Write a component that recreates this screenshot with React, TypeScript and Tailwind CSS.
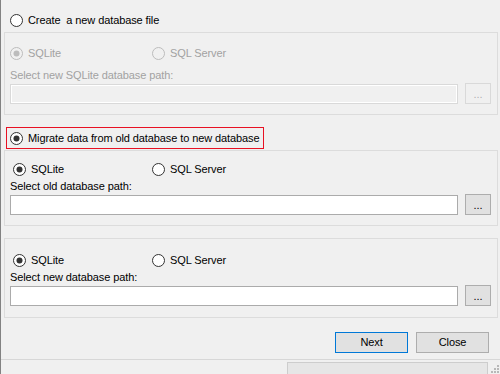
import type { ReactNode } from "react";

const FONT = "font-['Liberation_Sans',Arial,sans-serif] text-[11px] tracking-[-0.1px]";

function Radio({ checked, disabled }: { checked?: boolean; disabled?: boolean }) {
  const stroke = disabled ? "#bcbcbc" : "#333333";
  const fill = disabled ? "#f0f0f0" : "#ffffff";
  return (
    <svg width="13" height="13" viewBox="0 0 13 13" className="shrink-0">
      <circle cx="6.5" cy="6.5" r="6" fill={fill} stroke={stroke} />
      {checked && <circle cx="6.5" cy="6.5" r="3" fill={stroke} />}
    </svg>
  );
}

function Option({
  label,
  checked,
  disabled,
  className = "",
}: {
  label: ReactNode;
  checked?: boolean;
  disabled?: boolean;
  className?: string;
}) {
  return (
    <div className={`flex items-center h-[16px] gap-[5px] ${className}`}>
      <Radio checked={checked} disabled={disabled} />
      <span className={disabled ? "text-[#a2a2a2]" : "text-black"}>{label}</span>
    </div>
  );
}

function PathRow({ disabled }: { disabled?: boolean }) {
  return (
    <div className="flex items-start mt-[1px] pl-[5px]">
      {disabled ? (
        <div className="mt-[1px] w-[448px] h-[20px] border border-[#d9d9d9] bg-[#f0f0f0] shadow-[inset_0_0_0_1px_#ffffff]" />
      ) : (
        <div className="mt-[1px] w-[448px] h-[20px] border border-[#ababab] bg-white" />
      )}
      <button
        className={`ml-[7px] w-[26px] h-[21px] flex items-end justify-center pb-[3px] leading-none border ${
          disabled
            ? "border-[#d9d9d9] bg-[#f0f0f0] text-[#b0b0b0]"
            : "border-[#adadad] bg-[#e1e1e1] text-black"
        }`}
      >
        ...
      </button>
    </div>
  );
}

function EngineGroup({
  label,
  top,
  height,
}: {
  label: string;
  top: string;
  height: string;
}) {
  return (
    <div className={`ml-[3px] w-[494px] border border-[#dcdcdc] ${height}`}>
      <div className={`flex pl-[8px] ${top}`}>
        <Option label="SQLite" checked className="w-[139px]" />
        <Option label="SQL Server" />
      </div>
      <div className="mt-[2px] pl-[5px] h-[14px] leading-[14px] text-black">{label}</div>
      <PathRow />
    </div>
  );
}

export default function App() {
  return (
    <div
      className={`w-[500px] h-[374px] bg-[#f0f0f0] border-l border-[#828282] flex flex-col overflow-hidden ${FONT}`}
    >
      <div className="flex-1">
        <Option
          label={<span className="whitespace-pre">Create  a new database file</span>}
          className="mt-[12px] pl-[9px]"
        />

        <div className="mt-[4px]">
          <div className="ml-[3px] w-[494px] h-[83px] border border-[#dcdcdc]">
            <div className="flex mt-[12px] pl-[5px]">
              <Option label="SQLite" checked disabled className="w-[142px]" />
              <Option label="SQL Server" disabled />
            </div>
            <div className="mt-[7px] pl-[5px] h-[14px] leading-[14px] text-[#a2a2a2]">
              Select new SQLite database path:
            </div>
            <PathRow disabled />
          </div>
        </div>

        <div className="mt-[12px] ml-[5px] w-[258px] h-[22px] border border-[#e81123] flex items-center pl-[3px]">
          <Option label="Migrate data from old database to new database" checked />
        </div>

        <div className="mt-[1px]">
          <EngineGroup label="Select old database path:" top="mt-[10px]" height="h-[76px]" />
        </div>

        <div className="mt-[12px]">
          <EngineGroup label="Select new database path:" top="mt-[13px]" height="h-[80px]" />
        </div>

        <div className="mt-[14px] flex justify-end gap-[8px] pr-[11px]">
          <button className="w-[73px] h-[21px] border border-[#0078d7] bg-[#e1e1e1] text-black leading-none">
            Next
          </button>
          <button className="w-[73px] h-[21px] border border-[#adadad] bg-[#e1e1e1] text-black leading-none">
            Close
          </button>
        </div>
      </div>

      <div className="h-[15px] border-t border-[#d7d7d7] flex items-start relative">
        <div className="ml-[286px] mt-[2px] w-[201px] h-[14px] border border-[#cdcdcd] bg-[#e6e6e6]" />
        <svg width="12" height="12" viewBox="0 0 12 12" className="absolute right-0 bottom-0">
          <rect x="9" y="3" width="2" height="2" fill="#b8b8b8" />
          <rect x="6" y="6" width="2" height="2" fill="#b8b8b8" />
          <rect x="9" y="6" width="2" height="2" fill="#b8b8b8" />
          <rect x="3" y="9" width="2" height="2" fill="#b8b8b8" />
          <rect x="6" y="9" width="2" height="2" fill="#b8b8b8" />
          <rect x="9" y="9" width="2" height="2" fill="#b8b8b8" />
        </svg>
      </div>
    </div>
  );
}
